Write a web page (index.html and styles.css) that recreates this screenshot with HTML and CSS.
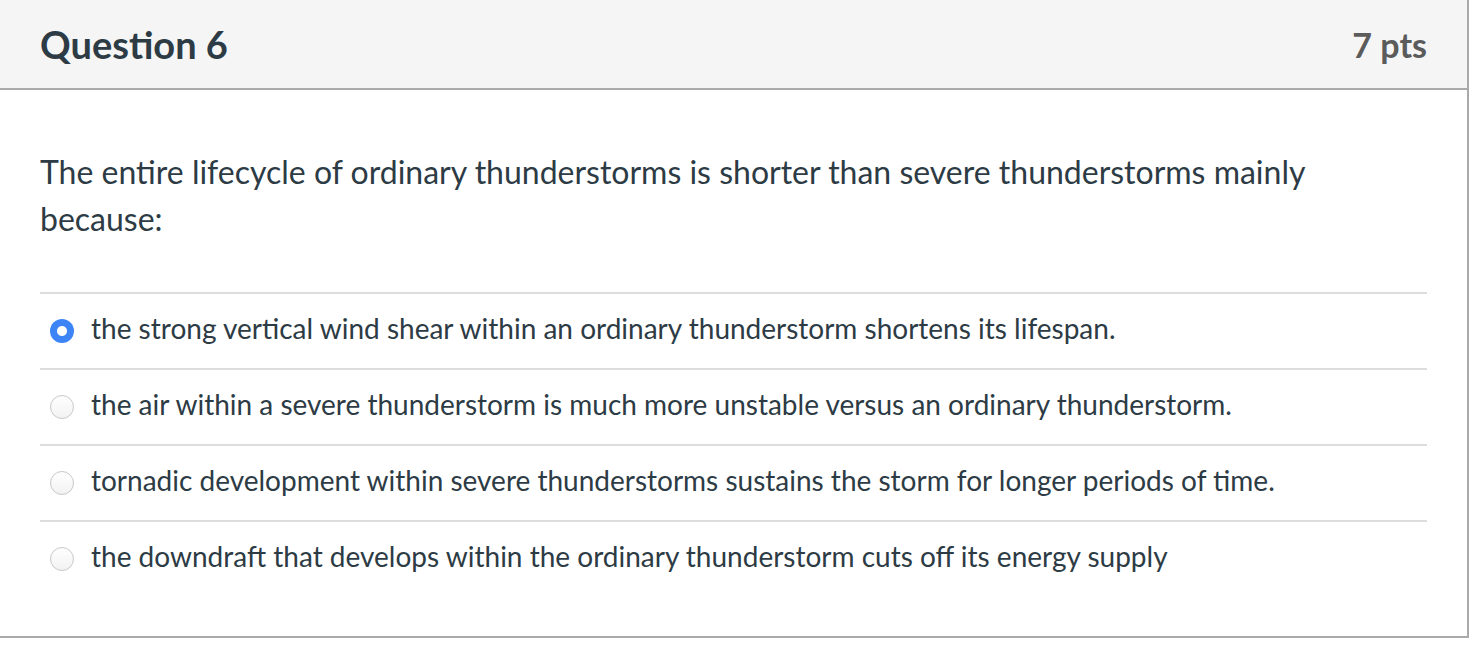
FILE: index.html
```html
<!DOCTYPE html>
<html lang="en">
<head>
<meta charset="utf-8">
<title>Question 6</title>
<link rel="stylesheet" href="styles.css">
</head>
<body>
<div class="card">
  <div class="card-header">
    <h2 class="q-title">Question 6</h2>
    <span class="q-points">7 pts</span>
  </div>
  <div class="card-body">
    <p class="q-text">The entire lifecycle of ordinary thunderstorms is shorter than severe thunderstorms mainly because:</p>
    <div class="answers">
      <label class="answer"><span class="radio checked"></span><span class="answer-text">the strong vertical wind shear within an ordinary thunderstorm shortens its lifespan.</span></label>
      <label class="answer"><span class="radio"></span><span class="answer-text">the air within a severe thunderstorm is much more unstable versus an ordinary thunderstorm.</span></label>
      <label class="answer"><span class="radio"></span><span class="answer-text">tornadic development within severe thunderstorms sustains the storm for longer periods of time.</span></label>
      <label class="answer"><span class="radio"></span><span class="answer-text">the downdraft that develops within the ordinary thunderstorm cuts off its energy supply</span></label>
    </div>
  </div>
</div>
</body>
</html>
```
FILE: styles.css
```css
html, body {
  margin: 0;
  padding: 0;
  background: #ffffff;
}
body {
  font-family: Lato, "Open Sans", sans-serif;
  color: #2d3b45;
}
.card {
  width: 1467px;
  margin: -2px 0 0 -2px;
  border: 2px solid #aaaaaa;
  background: #ffffff;
}
.card-header {
  height: 90px;
  box-sizing: border-box;
  display: flex;
  align-items: center;
  justify-content: space-between;
  padding: 0 40px 0 40px;
  background: #f5f5f5;
  border-bottom: 2px solid #aaaaaa;
}
.q-title {
  margin: 0;
  font-size: 38px;
  font-weight: 700;
  color: #2d3b45;
}
.q-points {
  font-size: 34px;
  font-weight: 700;
  color: #5b5b5b;
}
.card-body {
  padding: 58px 40px 40px 40px;
}
.q-text {
  margin: 0 0 50px;
  font-size: 32px;
  line-height: 47px;
}
.answers {
  display: flex;
  flex-direction: column;
}
.answer {
  display: flex;
  align-items: center;
  gap: 17px;
  height: 74px;
  padding-left: 10px;
  border-top: 2px solid #dddddd;
  font-size: 28px;
}
.answer-text {
  padding-bottom: 6px;
}
.radio {
  flex: none;
  width: 24px;
  height: 24px;
  box-sizing: border-box;
  border-radius: 50%;
  border: 1px solid #c8c8c8;
  background: linear-gradient(#ffffff, #f2f2f2);
}
.radio.checked {
  border: none;
  background: radial-gradient(circle, #ffffff 0 4.5px, #3d85f6 5.5px);
}
```
